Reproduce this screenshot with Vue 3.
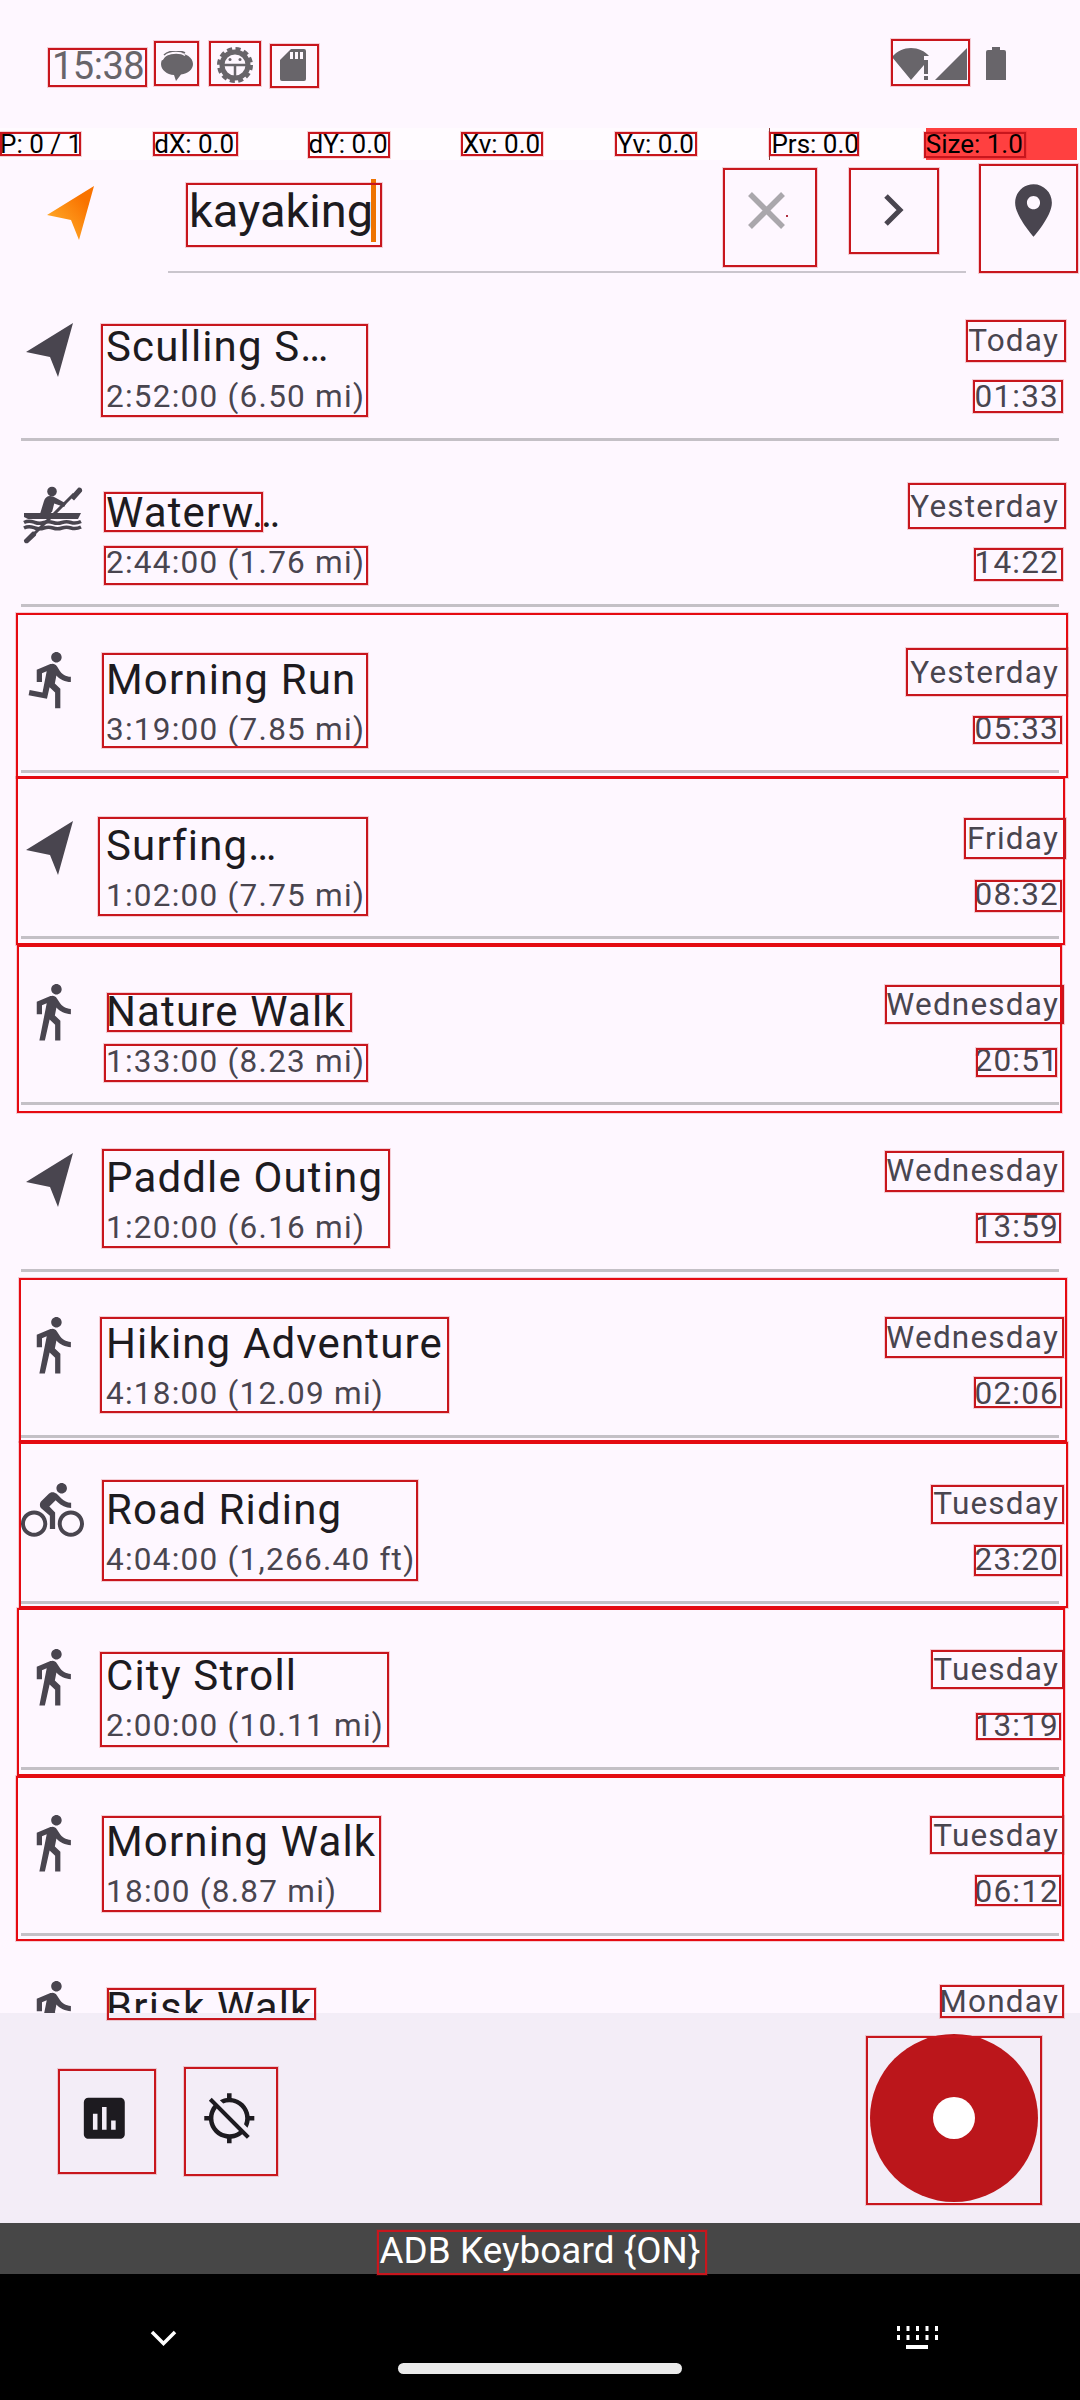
<script setup>
const icons = {
  walk: 'M13.5 5.5c1.1 0 2-.9 2-2s-.9-2-2-2-2 .9-2 2 .9 2 2 2zM9.8 8.9L7 23h2.1l1.8-8 2.1 2v6h2v-7.5l-2.1-2 .6-3C14.8 12 16.8 13 19 13v-2c-1.9 0-3.5-1-4.3-2.4l-1-1.6c-.4-.6-1-1-1.7-1-.3 0-.5.1-.8.1L6 8.3V13h2V9.6l1.8-.7',
  run: 'M13.49 5.48c1.1 0 2-.9 2-2s-.9-2-2-2-2 .9-2 2 .9 2 2 2zm-3.6 13.9l1-4.4 2.1 2v6h2v-7.5l-2.1-2 .6-3c1.3 1.5 3.3 2.5 5.5 2.5v-2c-1.9 0-3.5-1-4.3-2.4l-1-1.6c-.4-.6-1-1-1.7-1-.3 0-.5.1-.8.1l-5.2 2.2v4.7h2v-3.4l1.8-.7-1.6 8.1-4.9-1-.4 2 7 1.4z',
  bike: 'M15.5 5.5c1.1 0 2-.9 2-2s-.9-2-2-2-2 .9-2 2 .9 2 2 2zM5 12c-2.8 0-5 2.2-5 5s2.2 5 5 5 5-2.2 5-5-2.2-5-5-5zm0 8.5c-1.9 0-3.5-1.6-3.5-3.5s1.6-3.5 3.5-3.5 3.5 1.6 3.5 3.5-1.6 3.5-3.5 3.5zm5.8-10l2.4-2.4.8.8c1.3 1.3 3 2.1 5.1 2.1V9c-1.5 0-2.7-.6-3.6-1.5l-1.9-1.9c-.5-.4-1-.6-1.6-.6s-1.1.2-1.4.6L7.8 8.4c-.4.4-.6.9-.6 1.4 0 .6.2 1.1.6 1.4L11 14v5h2v-6.2l-2.2-2.3zM19 12c-2.8 0-5 2.2-5 5s2.2 5 5 5 5-2.2 5-5-2.2-5-5-5zm0 8.5c-1.9 0-3.5-1.6-3.5-3.5s1.6-3.5 3.5-3.5 3.5 1.6 3.5 3.5-1.6 3.5-3.5 3.5z'
}

const pointer = ['P: 0 / 1', 'dX: 0.0', 'dY: 0.0', 'Xv: 0.0', 'Yv: 0.0', 'Prs: 0.0', 'Size: 1.0']

const rows = [
  { icon: 'near', title: 'Sculling S…', sub: '2:52:00 (6.50 mi)', date: 'Today', time: '01:33' },
  { icon: 'kayak', title: 'Waterw…', sub: '2:44:00 (1.76 mi)', date: 'Yesterday', time: '14:22' },
  { icon: 'run', title: 'Morning Run', sub: '3:19:00 (7.85 mi)', date: 'Yesterday', time: '05:33' },
  { icon: 'near', title: 'Surfing…', sub: '1:02:00 (7.75 mi)', date: 'Friday', time: '08:32' },
  { icon: 'walk', title: 'Nature Walk', sub: '1:33:00 (8.23 mi)', date: 'Wednesday', time: '20:51' },
  { icon: 'near', title: 'Paddle Outing', sub: '1:20:00 (6.16 mi)', date: 'Wednesday', time: '13:59' },
  { icon: 'walk', title: 'Hiking Adventure', sub: '4:18:00 (12.09 mi)', date: 'Wednesday', time: '02:06' },
  { icon: 'bike', title: 'Road Riding', sub: '4:04:00 (1,266.40 ft)', date: 'Tuesday', time: '23:20' },
  { icon: 'walk', title: 'City Stroll', sub: '2:00:00 (10.11 mi)', date: 'Tuesday', time: '13:19' },
  { icon: 'walk', title: 'Morning Walk', sub: '18:00 (8.87 mi)', date: 'Tuesday', time: '06:12' },
  { icon: 'walk', title: 'Brisk Walk', sub: '', date: 'Monday', time: '' }
]

// Highlight rectangles drawn over the UI: [left, top, right, bottom]
const inner = [
  [48,48,147,87],[154,41,199,86],[209,41,261,86],[270,44,319,88],[891,39,970,86],
  [0,132,81,156],[153,132,238,156],[308,132,390,158],[461,132,543,156],[615,132,697,156],[769,132,859,156],[924,132,1026,158],
  [186,183,382,247],[723,168,817,267],[849,168,939,254],[979,164,1078,273],
  [101,324,368,417],[966,320,1066,362],[973,380,1063,413],
  [104,492,263,532],[104,546,368,585],[908,483,1066,529],[974,548,1063,581],
  [102,653,368,748],[906,648,1068,696],[973,716,1062,744],
  [98,817,368,916],[964,818,1066,859],[975,880,1062,912],
  [107,993,352,1032],[104,1044,368,1082],[885,985,1064,1024],[976,1048,1057,1077],
  [102,1149,390,1248],[885,1151,1064,1192],[976,1213,1061,1243],
  [100,1317,449,1413],[885,1317,1064,1358],[974,1377,1062,1408],
  [102,1480,418,1581],[931,1485,1064,1524],[974,1545,1062,1576],
  [100,1652,389,1747],[931,1650,1064,1689],[976,1713,1061,1740],
  [102,1816,381,1912],[930,1816,1064,1854],[975,1875,1061,1906],
  [107,1988,316,2020],[940,1985,1064,2018],
  [58,2069,156,2174],[184,2067,278,2176],[866,2036,1042,2205],[377,2230,707,2275]
]
const outer = [
  [16,613,1068,778],[16,777,1065,945],[17,945,1062,1113],
  [19,1278,1067,1442],[19,1442,1068,1608],[17,1608,1065,1776],[16,1776,1064,1941]
]
const rect = ([l, t, r, b]) => ({ left: l + 'px', top: t + 'px', width: r - l + 'px', height: b - t + 'px' })
</script>

<template>
  <div class="screen">
    <header class="status">
      <span class="clock">15:38</span>
      <svg class="st-bubble" viewBox="0 0 32 30">
        <path d="M16 2C7 2 0 6.500 0 13c0 6 6 10.500 13 11l2 6 5-6.500c7-1 12-5 12-10.500C32 6.500 25 2 16 2z" fill="#68656a"/>
        <path d="M1 9C3 3.500 9 2 15 2c4 0 7 .8 9 2.500" fill="none" stroke="#fef7ff" stroke-width="1.500"/>
        <path d="M3 4C6 1 10 0 15 0c4 0 7 .8 9 2" fill="none" stroke="#68656a" stroke-width="1.500"/>
      </svg>
      <svg class="st-gear" viewBox="0 0 36 36">
        <circle cx="18" cy="18" r="13" fill="none" stroke="#68656a" stroke-width="5"/>
        <circle cx="18" cy="18" r="16" fill="none" stroke="#68656a" stroke-width="4" stroke-dasharray="5 3.380"/>
        <path d="M6 18h24M18 18v12" stroke="#68656a" stroke-width="2.500"/>
        <circle cx="13" cy="12.500" r="1.500" fill="#68656a"/><circle cx="23" cy="12.500" r="1.500" fill="#68656a"/>
      </svg>
      <svg class="st-sd" viewBox="0 0 26 32">
        <path d="M11 0h13a2 2 0 0 1 2 2v28a2 2 0 0 1-2 2H2a2 2 0 0 1-2-2V11z" fill="#68656a"/>
        <path d="M10 3h3v7h-3zM15 3h3v7h-3zM20 3h3v7h-3z" fill="#fef7ff"/>
      </svg>
      <svg class="st-net" viewBox="0 0 76 34">
        <path d="M0 10C5 4 12 1 19 1c7 0 14 3 18 8l-5 0v9L19 33z" fill="#68656a"/>
        <path d="M32 13h4v14h-4zM32 29h4v4h-4z" fill="#68656a"/>
        <path d="M75 1v32H43z" fill="#68656a"/>
      </svg>
      <svg class="st-bat" viewBox="0 0 20 33">
        <path d="M6 0h8v3h4a2 2 0 0 1 2 2v28H0V5a2 2 0 0 1 2-2h4z" fill="#68656a"/>
      </svg>
    </header>

    <div class="pointer">
      <span v-for="(p, i) in pointer" :key="p" class="cell" :class="{ prs: i === 5, hot: i === 6 }">{{ p }}</span>
    </div>

    <div class="search">
      <svg class="arrow" viewBox="0 0 47 54">
        <defs>
          <linearGradient id="org" x1="1" y1="0" x2="0.2" y2="0.8">
            <stop offset="0.3" stop-color="#f97300"/><stop offset="1" stop-color="#ffa726"/>
          </linearGradient>
        </defs>
        <path d="M47 0L0 29l24 5 8 20z" fill="url(#org)"/>
      </svg>
      <div class="field">
        <div class="query">kayaking<i class="cursor"></i></div>
        <svg class="clear" viewBox="0 0 37 37"><path d="M2 2l33 33M35 2L2 35" stroke="#aaa7ac" stroke-width="5.500"/></svg>
        <i class="speck"></i>
        <svg class="next" viewBox="0 0 20 32"><path d="M2 2l14 14L2 30" fill="none" stroke="#49454f" stroke-width="5"/></svg>
      </div>
      <svg class="pin" viewBox="0 0 24 24"><path fill="#49454f" d="M12 2C8.130 2 5 5.130 5 9c0 5.250 7 13 7 13s7-7.750 7-13c0-3.870-3.130-7-7-7zm0 9.500c-1.380 0-2.500-1.120-2.500-2.500s1.120-2.500 2.500-2.500 2.500 1.120 2.500 2.500-1.120 2.500-2.500 2.500z"/></svg>
    </div>

    <main class="list">
      <article v-for="r in rows" :key="r.title" class="row">
        <svg v-if="r.icon === 'near'" class="ic" viewBox="0 0 63 63"><path fill="#49454f" d="M52 7L5 36l24 5 8 20z"/></svg>
        <svg v-else-if="r.icon === 'kayak'" class="ic" viewBox="0 0 63 63" fill="#49454f">
          <circle cx="31" cy="9.500" r="4.800"/>
          <path d="M19 32l4-13c.8-3 3-5 6-5 2.500 0 4 .8 6 2l10 5.500-1.800 3.500-10-3.500-2 8-3 3z"/>
          <path d="M3 31h57l-3 6H7l-4-2z"/>
          <path d="M3 40.500c5-2.500 8-1 11 0s6 1 9 0 6-1 9 0 6 1 9 0 6-1 9 0 6 1 10-1" fill="none" stroke="#49454f" stroke-width="3.500"/>
          <path d="M3 46c5-2.500 8-1 11 0s6 1 9 0 6-1 9 0 6 1 9 0 6-1 9 0 6 1 10-1" fill="none" stroke="#49454f" stroke-width="3.500"/>
          <path d="M53 12L13 52" stroke="#49454f" stroke-width="3"/>
          <path d="M49 15l8-9c2-1.500 5 1 4 3.500l-8 9zM3 58l8-8c2-1.500 5 1 4 3.500l-8 7.500c-2 1-4.500-.5-4-3z"/>
        </svg>
        <svg v-else class="ic" viewBox="0 0 24 24"><path fill="#49454f" :d="icons[r.icon]"/></svg>
        <div class="text">
          <div class="title">{{ r.title }}</div>
          <div v-if="r.sub" class="sub">{{ r.sub }}</div>
        </div>
        <div class="when">
          <div class="date">{{ r.date }}</div>
          <div v-if="r.time" class="time">{{ r.time }}</div>
        </div>
      </article>
    </main>

    <footer class="panel">
      <svg class="tool" viewBox="0 0 24 24"><path fill="#1d1b20" d="M19 3H5c-1.100 0-2 .9-2 2v14c0 1.100.9 2 2 2h14c1.100 0 2-.9 2-2V5c0-1.100-.9-2-2-2zM9 17H7v-7h2v7zm4 0h-2V7h2v10zm4 0h-2v-4h2v4z"/></svg>
      <svg class="tool" viewBox="0 0 24 24"><path fill="#1d1b20" d="M20.940 11c-.46-4.170-3.770-7.480-7.940-7.940V1h-2v2.060c-1.130.12-2.190.46-3.160.97l1.500 1.500C10.160 5.190 11.060 5 12 5c3.870 0 7 3.130 7 7 0 .94-.19 1.840-.52 2.650l1.500 1.500c.5-.96.84-2.020.97-3.150H23v-2h-2.060zM3 4.270l2.040 2.040C3.970 7.620 3.260 9.230 3.060 11H1v2h2.060c.46 4.170 3.770 7.480 7.940 7.940V23h2v-2.060c1.770-.2 3.380-.91 4.690-1.980L19.730 21 21 19.730 4.270 3 3 4.270zm13.270 13.270C15.090 18.450 13.610 19 12 19c-3.870 0-7-3.130-7-7 0-1.610.55-3.090 1.460-4.270l9.810 9.810z"/></svg>
      <div class="fab"><i class="dot"></i></div>
    </footer>

    <div class="toast">ADB Keyboard {ON}</div>

    <nav class="nav">
      <svg class="nav-back" viewBox="0 0 27 16"><path d="M2 2l11.500 11.500L25 2" fill="none" stroke="#fff" stroke-width="3.500"/></svg>
      <svg class="nav-kbd" viewBox="0 0 41 23" fill="#fff">
        <path d="M0 0h3v5H0zM9.500 0h3v5h-3zM19 0h3v5h-3zM28.500 0h3v5h-3zM38 0h3v5h-3z"/>
        <path d="M0 9h3v5H0zM9.500 9h3v5h-3zM19 9h3v5h-3zM28.500 9h3v5h-3zM38 9h3v5h-3z"/>
        <path d="M9 19h22v4H9z"/>
      </svg>
      <i class="pill"></i>
    </nav>

    <div v-for="(b, i) in outer" :key="'o' + i" class="box outer" :style="rect(b)"></div>
    <div v-for="(b, i) in inner" :key="'i' + i" class="box" :style="rect(b)"></div>
  </div>
</template>

<style scoped>
.screen {
  position: relative;
  width: 1080px;
  height: 2400px;
  overflow: hidden;
  display: flex;
  flex-direction: column;
  background: #fef7ff;
  font-family: Roboto, "Liberation Sans", sans-serif;
}
.status {
  height: 128px;
  flex: none;
  display: flex;
  align-items: flex-start;
}
.clock { margin: 44px 0 0 52px; font-size: 38px; line-height: 44px; letter-spacing: -0.5px; color: #68656a; width: 109px; }
.st-bubble { width: 32px; height: 30px; margin-top: 51px; }
.st-gear { width: 36px; height: 36px; margin: 47px 0 0 24px; }
.st-sd { width: 26px; height: 32px; margin: 49px 0 0 27px; }
.st-net { width: 76px; height: 34px; margin: 47px 0 0 586px; }
.st-bat { width: 20px; height: 33px; margin: 47px 0 0 18px; }

.pointer {
  height: 32px;
  flex: none;
  display: grid;
  grid-template-columns: repeat(7, 1fr);
  background: #fffbff;
  font-size: 26px;
  line-height: 32px;
  color: #000;
}
.cell { position: relative; white-space: nowrap; }
.prs::before { content: ""; position: absolute; left: -2px; top: 0; width: 1px; height: 32px; background: #8a3a3a; }
.hot { background: #ff4040; margin-right: 3px; }

.search { height: 115px; flex: none; display: flex; align-items: flex-start; }
.arrow { width: 47px; height: 54px; margin: 26px 0 0 47px; flex: none; }
.field {
  position: relative;
  width: 798px;
  height: 113px;
  margin-left: 74px;
  border-bottom: 2px solid #cac5cd;
  box-sizing: border-box;
  flex: none;
}
.query { padding: 19px 0 0 21px; font-size: 47px; line-height: 63px; color: #1d1b20; white-space: nowrap; }
.cursor { display: inline-block; width: 5px; height: 63px; margin-left: -2px; background: #ee7402; vertical-align: -15px; }
.clear { position: absolute; left: 580px; top: 32px; width: 37px; height: 37px; }
.speck { position: absolute; left: 618px; top: 55px; width: 2px; height: 2px; background: #b03040; }
.next { position: absolute; left: 716px; top: 34px; width: 20px; height: 32px; }
.pin { width: 63px; height: 63px; margin: 19px 0 0 36px; flex: none; }

.list { flex: 1; min-height: 0; overflow: hidden; }
.row {
  height: 166.1px;
  box-sizing: border-box;
  margin: 0 21px;
  padding-top: 41px;
  border-bottom: 3px solid #c4c0c6;
  display: flex;
  align-items: flex-start;
}
.ic { width: 63px; height: 63px; flex: none; }
.text { margin-left: 22px; padding-top: 9.4px; flex: 1; min-width: 0; }
.title { font-size: 42px; line-height: 44px; letter-spacing: 1.15px; color: #1d1b20; white-space: nowrap; }
.sub { margin-top: 10px; font-size: 31.5px; line-height: 36px; letter-spacing: 1.25px; color: #49454f; white-space: nowrap; }
.when { padding-top: 7px; text-align: right; font-size: 31.5px; line-height: 36px; letter-spacing: 1.2px; color: #49454f; }
.time { margin-top: 20px; }

.panel {
  height: 210px;
  flex: none;
  display: flex;
  align-items: center;
  gap: 70px;
  padding: 0 42px 0 77px;
  background: #f3edf7;
}
.tool { width: 54.6px; height: 54.6px; flex: none; }
.fab {
  width: 168px;
  height: 168px;
  margin-left: auto;
  border-radius: 50%;
  background: #bb161b;
  display: flex;
  align-items: center;
  justify-content: center;
}
.dot { width: 42px; height: 42px; border-radius: 50%; background: #fff; }

.toast {
  height: 51px;
  flex: none;
  background: #474747;
  color: #fff;
  font-size: 36.75px;
  line-height: 55px;
  letter-spacing: 0.1px;
  text-align: center;
}
.nav {
  position: relative;
  height: 126px;
  flex: none;
  background: #000;
  display: flex;
  align-items: flex-start;
  padding-left: 150px;
}
.nav-back { width: 27px; height: 16px; margin-top: 56px; }
.nav-kbd { width: 41px; height: 23px; margin: 52px 0 0 720px; }
.pill {
  position: absolute;
  left: 398px;
  bottom: 26px;
  width: 284px;
  height: 11px;
  border-radius: 6px;
  background: #eaeaea;
}

.box {
  position: absolute;
  box-sizing: border-box;
  border: 2px solid #c8161d;
  box-shadow: 0 0 0 1px rgba(200, 22, 29, 0.18);
  pointer-events: none;
}
.outer { border-color: #e60a12; }
</style>
